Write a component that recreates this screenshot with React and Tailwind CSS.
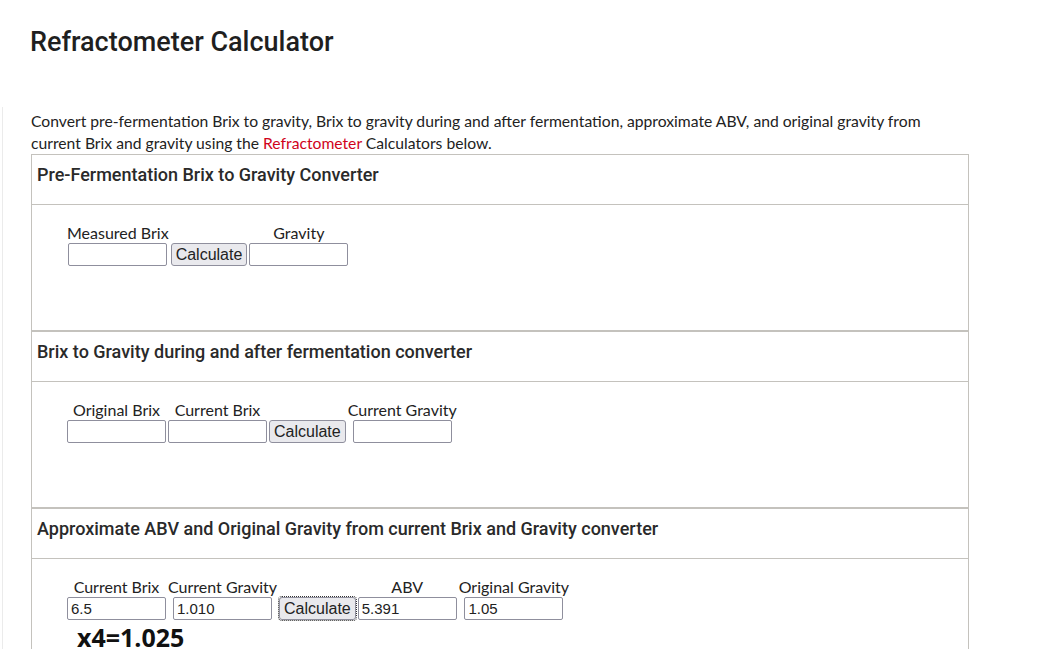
import React from 'react';

const label = "text-[16px] leading-[20px] text-[#222] whitespace-nowrap";
const inputCls =
  "w-[99px] h-[23px] border border-[#8f8f9d] rounded-[2px] bg-white px-[3px] text-[15px] text-[#222] [font-family:'Liberation_Sans',Arial,sans-serif] outline-none";

function Field({ text, value = '' }) {
  return (
    <div className="flex flex-col items-center">
      <span className={label}>{text}</span>
      <input className={inputCls} defaultValue={value} />
    </div>
  );
}

function CalcButton({ focused }) {
  return (
    <div className="flex flex-col items-center">
      <span className={label}>&nbsp;</span>
      <button
        type="button"
        className={
          "h-[23px] px-[4px] bg-[#e9e9ed] border border-[#8f8f9d] rounded-[3px] text-[16px] leading-none text-[#222] [font-family:'Liberation_Sans',Arial,sans-serif] " +
          (focused ? "outline-1 outline-dotted outline-[#333] outline-offset-0" : "")
        }
      >
        Calculate
      </button>
    </div>
  );
}

function Section({ title, children }) {
  return (
    <div className="border border-[#c4c2bd]">
      <div className="h-[50px] border-b border-[#c4c2bd] px-[5px] pt-[6px] text-[18px] font-medium text-[#2a2a2a] [font-family:Roboto,'Liberation_Sans',sans-serif]">
        {title}
      </div>
      <div className="h-[125px] pl-[35px] pt-[18px]">{children}</div>
    </div>
  );
}

export default function App() {
  return (
    <div className="bg-white min-h-[649px] [font-family:Lato,'Noto_Sans',sans-serif]">
      <div className="h-[107px] pl-[30px] pt-[26px]">
        <h1 className="text-[27px] leading-[32px] font-medium text-[#1f1f1f] [font-family:Roboto,'Liberation_Sans',sans-serif]">
          Refractometer Calculator
        </h1>
      </div>
      <div className="ml-[2px] border-l border-[#ebebeb] pl-[28px] pt-[3px] pr-[71px]">
        <p className="text-[15.7px] leading-[22px] text-[#222]">
          Convert pre-fermentation Brix to gravity, Brix to gravity during and after fermentation, approximate ABV, and original gravity from current Brix and gravity using the{' '}
          <a className="text-[#d0021b]" href="#">Refractometer</a> Calculators below.
        </p>
        <Section title="Pre-Fermentation Brix to Gravity Converter">
          <div className="flex gap-[2px]">
            <Field text="Measured Brix" />
            <CalcButton />
            <Field text="Gravity" />
          </div>
        </Section>
        <Section title="Brix to Gravity during and after fermentation converter">
          <div className="flex gap-[2px]">
            <Field text="Original Brix" />
            <Field text="Current Brix" />
            <CalcButton />
            <Field text="Current Gravity" />
          </div>
        </Section>
        <Section title="Approximate ABV and Original Gravity from current Brix and Gravity converter">
          <div className="flex gap-[2px]">
            <Field text="Current Brix" value="6.5" />
            <Field text="Current Gravity" value="1.010" />
            <CalcButton focused />
            <Field text="ABV" value="5.391" />
            <Field text="Original Gravity" value="1.05" />
          </div>
          <div className="pl-[10px] pt-[3px] text-[25px] leading-[28px] font-bold text-[#111] [font-family:'Open_Sans',sans-serif]">
            x4=1.025
          </div>
        </Section>
      </div>
    </div>
  );
}
